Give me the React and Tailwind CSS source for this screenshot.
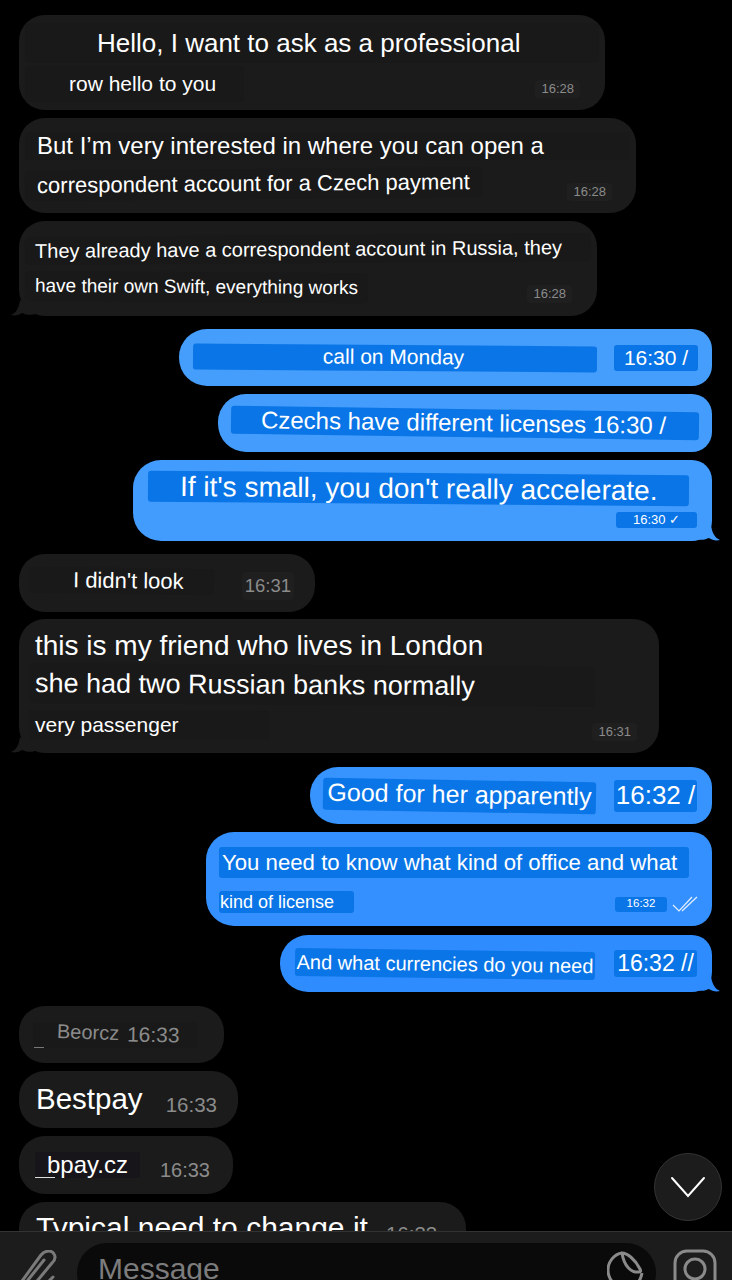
import React from "react";

function Tail({ side, color }) {
  if (side === "left") {
    return (
      <svg className="absolute -left-[8px] bottom-0 h-[16px] w-[24px]" viewBox="0 0 24 16">
        <path d="M0 15 C5 13 8 8 9 0 L24 10 L24 14 C18 16 14 14 11 13 C8 15 4 16 0 15 Z" fill={color} />
      </svg>
    );
  }
  return (
    <svg className="absolute -right-[8px] bottom-0 h-[16px] w-[24px]" viewBox="0 0 24 16">
      <path d="M24 15 C19 13 16 8 15 0 L0 10 L0 14 C6 16 10 14 13 13 C16 15 20 16 24 15 Z" fill={color} />
    </svg>
  );
}

function Dark({ className, tail, children }) {
  return (
    <div className={`relative ml-[19px] shrink-0 whitespace-nowrap rounded-[26px] bg-[#1b1b1b] text-white ${className}`}>
      {tail && <Tail side="left" color="#1b1b1b" />}
      {children}
    </div>
  );
}

function Blue({ className, tail, children }) {
  return (
    <div className={`relative ml-auto mr-[20px] shrink-0 whitespace-nowrap rounded-[28px] rounded-tr-[20px] rounded-br-[20px] text-white ${className}`}>
      {tail && <Tail side="right" color={tail} />}
      {children}
    </div>
  );
}

function DarkTime({ children, className = "" }) {
  return <span className={`rounded-[4px] bg-[#1f1f1f] px-[6px] text-[13px] leading-[18px] text-[#8b8b8b] ${className}`}>{children}</span>;
}

export default function App() {
  return (
    <div className="relative flex h-[1280px] w-[732px] flex-col overflow-hidden bg-black font-['Liberation_Sans',Arial,sans-serif]">
      <div className="flex h-[1231px] flex-col overflow-hidden pt-[15px]">
        <Dark className="flex h-[95px] w-[586px] flex-col px-[6px] pt-[8px]">
          <div className="h-[40px] rounded bg-[#191919] pl-[72px] text-[26px] leading-[40px]">Hello, I want to ask as a professional</div>
          <div className="mt-[3px] flex items-end justify-between pr-[19px]">
            <span className="rounded bg-[#191919] pl-[44px] pr-[28px] text-[21px] leading-[36px]">row hello to you</span>
            <DarkTime className="mb-[4px]">16:28</DarkTime>
          </div>
        </Dark>

        <Dark className="mt-[8px] flex h-[95px] w-[617px] flex-col px-[6px] pt-[14px]">
          <div className="h-[28px] rounded bg-[#191919] pl-[12px] text-[24px] leading-[28px]">But I’m very interested in where you can open a</div>
          <div className="mt-[9px] flex items-end justify-between pr-[18px]">
            <span className="-rotate-[0.5deg] rounded bg-[#191919] px-[12px] text-[22px] leading-[30px]">correspondent account for a Czech payment</span>
            <DarkTime className="-mb-[2px]">16:28</DarkTime>
          </div>
        </Dark>

        <Dark tail className="mt-[8px] flex h-[95px] w-[578px] flex-col px-[6px] pt-[14px]">
          <div className="-rotate-[0.4deg] rounded bg-[#191919] px-[10px] text-[20px] leading-[28px]">They already have a correspondent account in Russia, they</div>
          <div className="mt-[9px] flex items-end justify-between pr-[19px]">
            <span className="rotate-[0.4deg] rounded bg-[#191919] px-[10px] text-[19px] leading-[30px]">have their own Swift, everything works</span>
            <DarkTime className="-mb-[1px]">16:28</DarkTime>
          </div>
        </Dark>

        <Blue className="mt-[13px] flex h-[57px] w-[533px] items-center gap-[17px] bg-[#459efb] pl-[14px] pr-[14px]">
          <div className="flex h-[26px] flex-1 rotate-[0.4deg] items-center justify-center rounded-[3px] bg-[#0a75e6] pb-[3px] pr-[3px] text-[21px]">call on Monday</div>
          <div className="flex h-[26px] w-[84px] items-center justify-center rounded-[3px] bg-[#0a75e6] text-[21px]">16:30 /</div>
        </Blue>

        <Blue className="mt-[8px] flex h-[58px] w-[494px] items-center bg-[#449dfc] pl-[13px] pr-[13px]">
          <div className="flex h-[28px] w-full rotate-[0.8deg] items-center rounded-[3px] bg-[#0a75e6] pl-[30px] text-[24px]">Czechs have different licenses 16:30 /</div>
        </Blue>

        <Blue tail="#429cfd" className="mt-[8px] flex h-[81px] w-[579px] flex-col bg-[#429cfd] pl-[15px] pr-[15px] pt-[13px]">
          <div className="flex h-[31px] w-[541px] rotate-[0.5deg] items-center rounded-[3px] bg-[#0a75e6] pl-[32px] text-[28px]">If it's small, you don't really accelerate.</div>
          <div className="ml-auto mt-[8px] flex h-[16px] w-[81px] items-center justify-center rounded-[3px] bg-[#0a75e6] text-[13px]">16:30 ✓</div>
        </Blue>

        <Dark className="mt-[13px] flex h-[58px] w-[296px] items-center justify-between pl-[10px] pr-[21px]">
          <span className="-mt-[4px] rotate-[0.8deg] rounded bg-[#191919] pl-[44px] pr-[30px] text-[22px] leading-[26px]">I didn't look</span>
          <span className="mt-[6px] rounded bg-[#1f1f1f] px-[3px] text-[18.5px] text-[#8b8b8b]">16:31</span>
        </Dark>

        <Dark tail className="mt-[7px] flex h-[134px] w-[640px] flex-col px-[10px] pt-[8px]">
          <div className="pl-[6px] text-[28px] leading-[38px]">this is my friend who lives in London</div>
          <div className="text-[27px] leading-[40px]"><span className="inline-block rotate-[0.4deg] rounded bg-[#191919] pl-[6px] pr-[120px]">she had two Russian banks normally</span></div>
          <div className="mt-[5px] flex items-end justify-between pr-[12px]">
            <span className="rounded bg-[#191919] pl-[6px] pr-[90px] text-[21px] leading-[30px]">very passenger</span>
            <DarkTime className="-mb-[1px]">16:31</DarkTime>
          </div>
        </Dark>

        <Blue className="mt-[14px] flex h-[57px] w-[402px] items-center justify-between bg-[#3793fe] pl-[13px] pr-[15px]">
          <div className="flex h-[32px] w-[273px] rotate-[1deg] items-center justify-center rounded-[3px] bg-[#0a75e6] pb-[2px] text-[25px]">Good for her apparently</div>
          <div className="flex h-[32px] w-[83px] items-center justify-center rounded-[3px] bg-[#0a75e6] text-[26px]">16:32 /</div>
        </Blue>

        <Blue className="mt-[8px] flex h-[94px] w-[506px] flex-col bg-[#3590ff] pl-[13px] pr-[14px] pt-[15px]">
          <div className="flex h-[31px] w-[470px] items-center rounded-[3px] bg-[#0a75e6] pl-[3px] text-[22.2px]">You need to know what kind of office and what</div>
          <div className="mt-[13px] flex items-end justify-between">
            <span className="flex h-[22px] w-[135px] items-center rounded-[3px] bg-[#0a75e6] pl-[1px] text-[18px]">kind of license</span>
            <div className="flex items-center gap-[5px]">
              <span className="flex h-[15px] w-[52px] items-center justify-center rounded-[3px] bg-[#0a75e6] text-[11.5px]">16:32</span>
              <svg className="h-[18px] w-[26px]" viewBox="0 0 26 18" fill="none" stroke="#e4effc" strokeWidth="1.2">
                <path d="M1 10 L7 16 L20 2" />
                <path d="M10 16 L25 2" />
              </svg>
            </div>
          </div>
        </Blue>

        <Blue tail="#2f8cfe" className="mt-[9px] flex h-[57px] w-[432px] items-center justify-between bg-[#2f8cfe] pl-[15px] pr-[15px]">
          <div className="flex h-[28px] w-[300px] rotate-[0.8deg] items-center justify-center rounded-[3px] bg-[#0a75e6] text-[20px]">And what currencies do you need</div>
          <div className="flex h-[27px] w-[83px] items-center justify-center rounded-[3px] bg-[#0a75e6] text-[23px]">16:32 //</div>
        </Blue>

        <Dark className="mt-[14px] flex h-[57px] w-[205px] items-center pl-[14px]">
          <div className="relative flex h-[26px] w-[165px] items-center rounded bg-[#191919] pl-[24px]">
            <span className="-mt-[6px] rotate-[2deg] text-[20px] text-[#8b8b8b]">Beorcz</span>
            <span className="ml-[8px] rotate-[1deg] text-[21px] text-[#8b8b8b]">16:33</span>
            <span className="absolute bottom-0 left-[1px] h-px w-[10px] bg-[#777777]" />
          </div>
        </Dark>

        <Dark className="mt-[8px] flex h-[57px] w-[219px] items-center justify-between pl-[17px] pr-[21px]">
          <span className="-mt-[2px] text-[29.5px] leading-[32px]">Bestpay</span>
          <span className="mt-[12px] text-[20.5px] text-[#8b8b8b]">16:33</span>
        </Dark>

        <Dark className="mt-[8px] flex h-[58px] w-[214px] items-center justify-between pl-[16px] pr-[23px]">
          <span className="relative rounded-[2px] bg-[#17151a] pl-[12px] pr-[12px] text-[24px] leading-[26px]">
            bpay.cz
            <span className="absolute bottom-0 left-0 h-px w-[20px] bg-[#dddddd]" />
          </span>
          <span className="mt-[10px] text-[20px] text-[#8b8b8b]">16:33</span>
        </Dark>

        <Dark className="mt-[8px] flex h-[58px] w-[447px] items-start pl-[17px] pt-[6px]">
          <span className="text-[30px] leading-[40px]">Typical need to change it</span>
          <span className="ml-[18px] mt-[11px] text-[20.5px] text-[#8b8b8b]">16:33</span>
        </Dark>
      </div>

      <div className="flex h-[49px] items-start overflow-hidden border-t border-[#333333] bg-[#1c1c1c]">
        <svg className="ml-[19px] mt-[18px] h-[48px] w-[38px] shrink-0" viewBox="0 0 38 48" fill="none" stroke="#7a7a7a" strokeWidth="3" strokeLinecap="round" strokeLinejoin="round">
          <path d="M12 48 C4 46 0 38 3 31 L22 5 C26 0 33 0 35 4 C37 7 36 10 33 13 L14 36" />
          <path d="M25 10 L9 30 C6 34 8 40 12 42 C16 44 19 42 22 39 L34 27" />
        </svg>
        <div className="ml-[20px] mt-[11px] flex h-[60px] w-[579px] shrink-0 items-start justify-between rounded-[30px] bg-[#0a0a0a] pl-[21px] pr-[11px]">
          <span className="mt-[8px] text-[30px] leading-[36px] text-[#7c7c7c]">Message</span>
          <svg className="mt-[8px] h-[40px] w-[38px]" viewBox="0 0 38 40" fill="none" stroke="#8a8a8a" strokeWidth="3" strokeLinejoin="round">
            <path d="M15 2 C7 3 1 11 1 19 C1 29 9 37 19 37 C27 37 33 32 35 22" />
            <path d="M15 2 C20 2 28 8 33 18 C34 20 34 21 32 21 C24 22 17 15 15 2 Z" />
          </svg>
        </div>
        <svg className="ml-[17px] mt-[17px] h-[48px] w-[44px] shrink-0" viewBox="0 0 44 48" fill="none" stroke="#8a8a8a" strokeWidth="3">
          <rect x="2" y="2" width="40" height="60" rx="12" />
          <circle cx="22" cy="20" r="10" />
        </svg>
      </div>

      <button className="absolute left-[654px] top-[1153px] flex h-[68px] w-[68px] items-center justify-center rounded-full border border-[#333333] bg-[#1c1c1c]">
        <svg className="h-[22px] w-[36px]" viewBox="0 0 36 22" fill="none" stroke="#ffffff" strokeWidth="2" strokeLinecap="round">
          <path d="M2 2 L18 20 L34 2" />
        </svg>
      </button>
    </div>
  );
}
